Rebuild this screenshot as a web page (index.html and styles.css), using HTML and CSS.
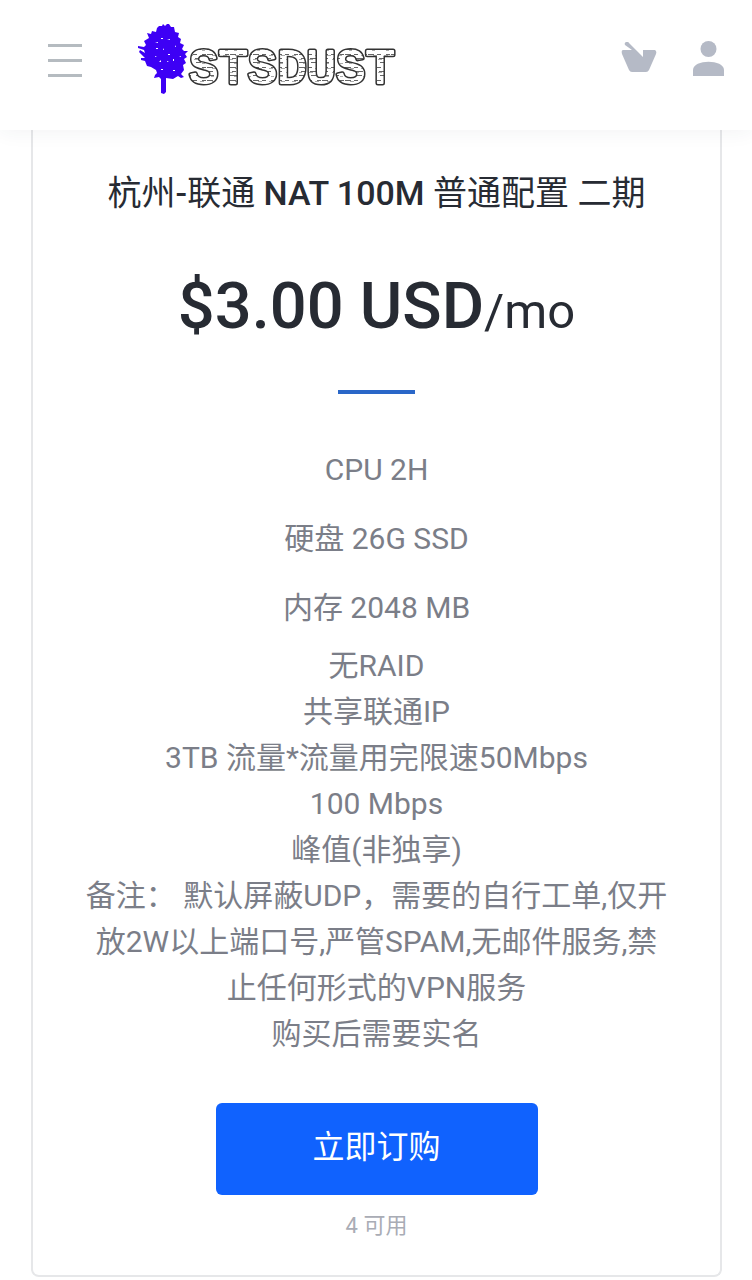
FILE: index.html
```html
<!DOCTYPE html>
<html lang="zh-CN">
<head>
<meta charset="utf-8">
<meta name="viewport" content="width=device-width, initial-scale=1">
<title>STSDUST</title>
<link rel="stylesheet" href="styles.css">
</head>
<body>
<header class="header">
  <button class="icon-button menu" type="button" aria-label="菜单">
    <svg width="34" height="36" viewBox="0 0 34 36" fill="#b5bbc0"><path d="M0 1h34v3H0zM0 16h34v3H0zM0 31h34v3H0z"/></svg>
  </button>
  <a class="brand" href="#" aria-label="STSDUST">
    <svg width="260" height="76" viewBox="136 21 260 76">
      <defs>
        <pattern id="newsprint" width="23" height="13" patternUnits="userSpaceOnUse">
          <path fill="#fff" d="M0 0h23v13H0z"/>
          <path stroke="#666" stroke-width="1" fill="none" d="M0 2.500h6m3 0h4m5 0h4M2 6.500h4m5 0h7M0 10.500h7m5 0h5"/>
          <path stroke="#aaa" stroke-width="1" fill="none" d="M5 3.500h4m7 0h4M0 7.500h3m7 0h4M4 11.500h3m11 0h3"/>
        </pattern>
      </defs>
      <path fill="#3d00f5" d="M159 26L162 26 163 24 165 26 167 24 169 24 171 27 174 27 175 32 179 33 178 37 181 39 180 43 184 45 182 49 184 51 188 51 185 54 187 57 184 59 186 63 183 65 184 70 181 74 184 77 181 78 178 76 173 79 166 78 166 92 164 94 161 93 161 79 159 77 154 78 155 75 157 73 156 70 151 67 147 66 145 61 141 60 141 58 145 58 139 52 140 50 145 53 144 50 138 48 138 46 144 47 146 45 144 41 149 38 147 33 151 34 152 31 156 32 157 28z"/>
      <path fill="#fff" d="M155 43l3-1v1zM161 38h2v1h-2zM167 40l3-1v1zM156 48h2v1h-2zM163 50l1-2v2zM175 45l1 2h-1zM155 56l2 1h-2zM168 54h2v1h-2zM179 57l2-1v1zM159 62l2-2v2zM167 61l2 1h-2zM173 59h1v2h-1zM161 69h2v1h-2zM173 70h2v1h-2z"/>
      <g class="brand-text">
        <text class="brand-edge" x="189" y="83">STSDUST</text>
        <text class="brand-face" x="189" y="83" aria-hidden="true">STSDUST</text>
      </g>
    </svg>
  </a>
  <nav class="actions" aria-label="账户">
    <a href="#" class="icon-button" aria-label="购物车">
      <svg width="36" height="34" viewBox="0 0 36 34" fill="#b5bac6"><path d="M5 0q2-1 3 1l14 14V8h12q2 1 1 4l-7 16q-1 2-3 2H11q-2 0-3-2L1 12q-1-4 1-4h9L4 3q-1-2 1-3z"/></svg>
    </a>
    <a href="#" class="icon-button" aria-label="用户">
      <svg width="31" height="36" viewBox="0 0 31 36" fill="#b5bac6"><circle cx="15.500" cy="8" r="8"/><path d="M0 35V29C0 18 31 18 31 29v6z"/></svg>
    </a>
  </nav>
</header>
<main class="page">
  <article class="card">
    <h2 class="title">杭州<span class="medium">-</span>联通 <span class="medium">NAT 100M</span> 普通配置 二期</h2>
    <p class="price"><strong class="amount">$3.00 USD</strong>/mo</p>
    <hr class="divider">
    <ul class="specs">
      <li>CPU 2H</li>
      <li>硬盘 26G SSD</li>
      <li>内存 2048 MB</li>
    </ul>
    <p class="details">无RAID<br>共享联通IP<br>3TB 流量*流量用完限速50Mbps<br>100 Mbps<br>峰值(非独享)<br>备注： 默认屏蔽UDP，需要的自行工单,仅开放2W以上端口号,严管SPAM,无邮件服务,禁止任何形式的VPN服务<br>购买后需要实名</p>
    <button class="order" type="button">立即订购</button>
    <p class="stock">4 可用</p>
  </article>
</main>
</body>
</html>
```
FILE: styles.css
```css
* { box-sizing: border-box; }
body {
  margin: 0;
  background: #fff;
  color: #272b33;
  font-family: Roboto, "Noto Sans CJK SC", sans-serif;
}
h2, p, ul { margin: 0; padding: 0; font-weight: 400; }
svg { display: block; }
.header {
  position: sticky;
  top: 0;
  display: flex;
  align-items: center;
  height: 130px;
  padding: 0 28px 12px 48px;
  background: #fff;
  box-shadow: 0 0 20px rgba(40, 50, 80, .07);
}
.icon-button { padding: 0; border: 0; background: none; }
.menu { padding-top: 4px; }
.brand { margin-left: 54px; }
.brand-text {
  font: 400 49px "Liberation Mono", monospace;
  stroke-linejoin: round;
  stroke-linecap: round;
}
.brand-edge { fill: #333; stroke: #333; stroke-width: 5px; }
.brand-face { fill: url(#newsprint); stroke: url(#newsprint); stroke-width: 2px; }
.actions { display: flex; align-items: center; gap: 36px; margin-left: auto; }
.page { padding: 0 30px 4px 31px; }
.card {
  display: flex;
  flex-direction: column;
  align-items: center;
  padding: 40px 50px 32px;
  border: 2px solid #e6e7e9;
  border-top: 0;
  border-radius: 0 0 8px 8px;
  text-align: center;
}
.title { font-size: 34px; line-height: 46px; }
.medium { font-weight: 500; }
.price { margin-top: 42px; font-size: 49px; line-height: 96px; }
.amount { font-size: 65px; font-weight: 500; }
.divider { width: 77px; height: 4px; margin: 30px 0 42px; border: 0; background: #2a67c8; }
.specs, .details { color: #7b7e88; font-size: 30px; line-height: 46px; }
.specs { list-style: none; }
.specs li { padding: 11px 0 12px; }
.order {
  width: 322px;
  max-width: 100%;
  margin-top: 46px;
  padding: 18px 20px 22px;
  border: 0;
  border-radius: 6px;
  background: #1062fe;
  color: #fff;
  font: inherit;
  font-size: 32px;
  line-height: 52px;
}
.stock { margin-top: 14px; color: #a9acb5; font-size: 22px; line-height: 34px; }
```
